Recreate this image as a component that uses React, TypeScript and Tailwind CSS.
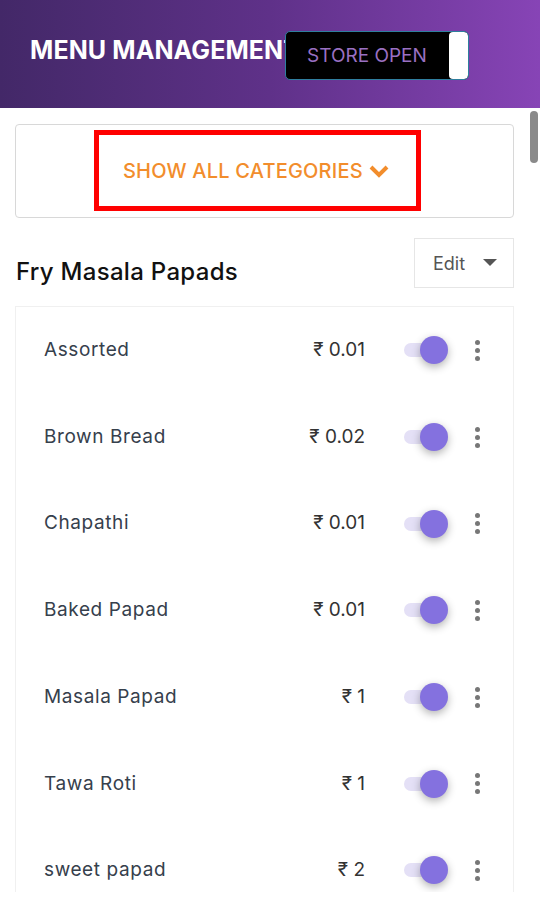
import React from "react";

const items = [
  { name: "Assorted", price: "0.01" },
  { name: "Brown Bread", price: "0.02" },
  { name: "Chapathi", price: "0.01" },
  { name: "Baked Papad", price: "0.01" },
  { name: "Masala Papad", price: "1" },
  { name: "Tawa Roti", price: "1" },
  { name: "sweet papad", price: "2" },
];

function Toggle() {
  return (
    <div className="relative w-[44px] h-[28px] flex items-center">
      <div className="w-[41px] h-[14px] rounded-full bg-[#e4e0f6]" />
      <div className="absolute right-0 top-0 w-[28px] h-[28px] rounded-full bg-[#8471df] shadow-[0_3px_8px_rgba(0,0,0,0.3)]" />
    </div>
  );
}

function Dots() {
  return (
    <div className="flex flex-col gap-[3px] w-[6px] items-center">
      <span className="w-[5px] h-[5px] rounded-full bg-[#777]" />
      <span className="w-[5px] h-[5px] rounded-full bg-[#777]" />
      <span className="w-[5px] h-[5px] rounded-full bg-[#777]" />
    </div>
  );
}

export default function App() {
  return (
    <div className="w-[540px] h-[920px] bg-white overflow-hidden relative font-['Inter',sans-serif]">
      {/* header */}
      <div className="h-[108px] bg-gradient-to-r from-[#432868] via-[#5f3189] to-[#8744b6] flex items-center pl-[30px] overflow-hidden">
        <h1 className="text-white font-bold text-[25px] tracking-[0.1px] whitespace-nowrap w-[255px] overflow-visible -mt-[7px] relative z-0">
          MENU MANAGEMENT
        </h1>
        <div className="flex h-[49px] w-[184px] bg-black border border-[#2f7e9e] rounded-[5px] overflow-hidden relative z-10 mt-[2px]">
          <div className="flex-1 flex items-center pl-[21px] pt-[3px] text-[#9a70c2] text-[19px]">STORE OPEN</div>
          <div className="w-[19px] bg-white rounded-[4px]" />
        </div>
      </div>

      {/* scrollbar */}
      <div className="absolute right-[2px] top-[111px] w-[8px] h-[52px] rounded-full bg-[#8a8a8a]" />

      <div className="pl-[15px] pr-[26px] pt-[16px]">
        {/* categories */}
        <div className="h-[94px] border border-[#d8d8d8] rounded-[4px] flex items-center relative">
          <div className="absolute left-[78px] top-[5px] w-[327px] h-[81px] border-[5px] border-[#ff0000]" />
          <div className="flex items-center gap-[6px] text-[#f28d2c] text-[20px] font-medium tracking-[0.2px] ml-[107px] -mt-[1px]">
            SHOW ALL CATEGORIES
            <svg width="20" height="14" viewBox="0 0 20 14">
              <path d="M2 3 L10 11 L18 3" stroke="#f28d2c" strokeWidth="4" fill="none" strokeLinejoin="miter" />
            </svg>
          </div>
        </div>

        {/* category title */}
        <div className="flex items-center justify-between mt-[18px]">
          <h2 className="text-[24px] font-medium tracking-[0.3px] text-[#111] ml-[1px] mt-[18px]">Fry Masala Papads</h2>
          <div className="w-[100px] h-[50px] border border-[#e6e6e6] flex items-center pl-[18px] gap-[18px] text-[18px] text-[#555]">
            Edit
            <svg width="14" height="8" viewBox="0 0 14 8">
              <path d="M0 0 L14 0 L7 7 Z" fill="#555" />
            </svg>
          </div>
        </div>

        {/* list */}
        <div className="mt-[16px] h-[586px] border border-b-0 border-[#f0f0f0] overflow-hidden">
          {items.map((it) => (
            <div key={it.name} className="h-[86.7px] flex items-center pl-[28px] pr-[33px]">
              <div className="flex-1 text-[19px] text-[#36404c] tracking-[0.6px]">{it.name}</div>
              <div className="text-[19px] text-[#333] w-[100px] text-right">₹ {it.price}</div>
              <div className="ml-[39px] mr-[26px]">
                <Toggle />
              </div>
              <Dots />
            </div>
          ))}
        </div>
      </div>
    </div>
  );
}
